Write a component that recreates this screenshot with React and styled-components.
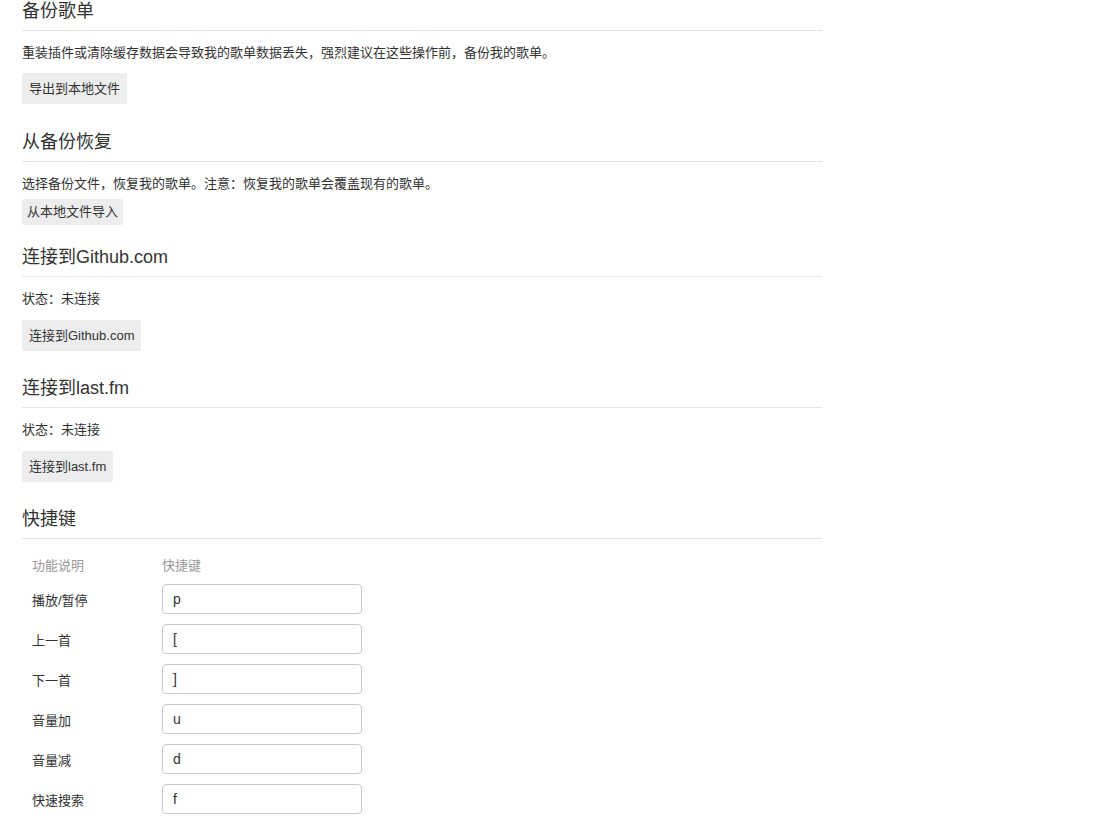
import React from "react";
import styled, { createGlobalStyle } from "styled-components";

const GlobalStyle = createGlobalStyle`
  html, body {
    margin: 0;
    padding: 0;
    background: #fff;
  }
  body {
    font-family: "Liberation Sans", "Noto Sans CJK SC", sans-serif;
    font-size: 13px;
    color: #333;
  }
`;

const Page = styled.div`
  width: 800px;
  padding: 0 22px;
  display: flex;
  flex-direction: column;
`;

const Section = styled.section`
  display: flex;
  flex-direction: column;
  align-items: flex-start;
  margin-bottom: ${(p) => (p.$after ?? 26)}px;
`;

const Heading = styled.h3`
  align-self: stretch;
  margin: 0;
  font-size: 18px;
  font-weight: normal;
  line-height: 22px;
  padding-bottom: 8px;
  border-bottom: 1px solid #e5e5e5;
  color: #333;
`;

const Desc = styled.p`
  margin: 13px 0 0;
  font-size: 13px;
  line-height: 17px;
`;

const ActionButton = styled.button`
  margin-top: ${(p) => p.$gap || 12}px;
  border: none;
  border-radius: 2px;
  background: #ededed;
  color: #333;
  font-family: inherit;
  font-size: 13px;
  line-height: ${(p) => (p.$compact ? 16 : 19)}px;
  padding: ${(p) => (p.$compact ? "5px 5px" : "6px 7px")};
  cursor: pointer;
`;

const Table = styled.table`
  margin-top: 10px;
  border-collapse: collapse;
`;

const HeadCell = styled.th`
  height: 30px;
  padding: 0 10px;
  text-align: left;
  font-weight: normal;
  color: #999;
  font-size: 13px;
  width: ${(p) => p.$w || "auto"};
`;

const Cell = styled.td`
  height: 40px;
  padding: 0 10px;
  font-size: 13px;
  color: #333;
  vertical-align: middle;
`;

const KeyInput = styled.input`
  display: block;
  box-sizing: border-box;
  width: 200px;
  height: 30px;
  border: 1px solid #c8c8c8;
  border-radius: 4px;
  padding: 0 10px;
  font-family: "Liberation Sans", sans-serif;
  font-size: 14px;
  color: #333;
  background: #fff;
  outline: none;
`;

const shortcuts = [
  ["播放/暂停", "p"],
  ["上一首", "["],
  ["下一首", "]"],
  ["音量加", "u"],
  ["音量减", "d"],
  ["快速搜索", "f"],
];

export default function App() {
  return (
    <>
      <GlobalStyle />
      <Page>
        <Section $after={27}>
          <Heading>备份歌单</Heading>
          <Desc>重装插件或清除缓存数据会导致我的歌单数据丢失，强烈建议在这些操作前，备份我的歌单。</Desc>
          <ActionButton $gap={12}>导出到本地文件</ActionButton>
        </Section>
        <Section $after={21}>
          <Heading>从备份恢复</Heading>
          <Desc>选择备份文件，恢复我的歌单。注意：恢复我的歌单会覆盖现有的歌单。</Desc>
          <ActionButton $compact $gap={7}>从本地文件导入</ActionButton>
        </Section>
        <Section>
          <Heading>连接到Github.com</Heading>
          <Desc>状态：未连接</Desc>
          <ActionButton $gap={13}>连接到Github.com</ActionButton>
        </Section>
        <Section>
          <Heading>连接到last.fm</Heading>
          <Desc>状态：未连接</Desc>
          <ActionButton $gap={13}>连接到last.fm</ActionButton>
        </Section>
        <Section $after={0}>
          <Heading>快捷键</Heading>
          <Table>
            <thead>
              <tr>
                <HeadCell $w="110px">功能说明</HeadCell>
                <HeadCell>快捷键</HeadCell>
              </tr>
            </thead>
            <tbody>
              {shortcuts.map(([label, key]) => (
                <tr key={label}>
                  <Cell>{label}</Cell>
                  <Cell>
                    <KeyInput defaultValue={key} readOnly />
                  </Cell>
                </tr>
              ))}
            </tbody>
          </Table>
        </Section>
      </Page>
    </>
  );
}
